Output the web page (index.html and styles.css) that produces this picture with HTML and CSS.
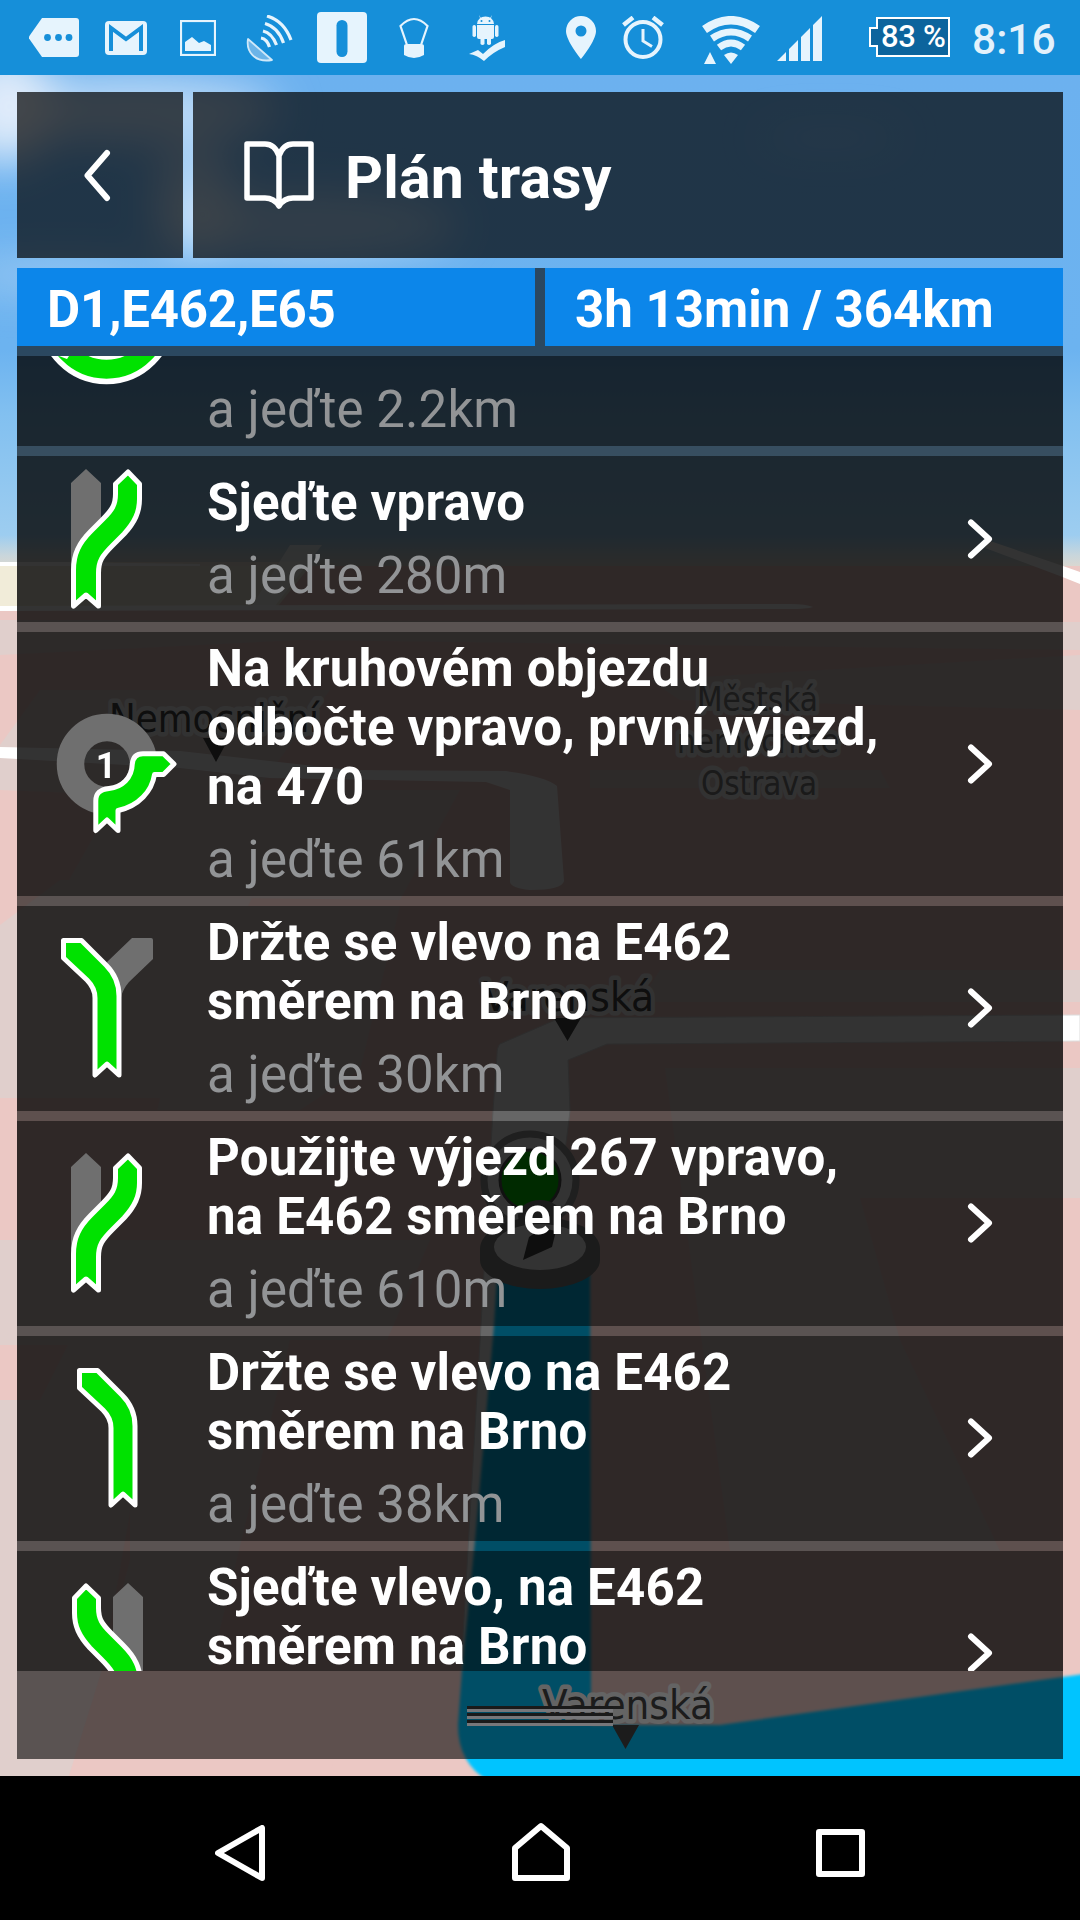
FILE: index.html
```html
<!DOCTYPE html>
<html lang="cs">
<head>
<meta charset="utf-8">
<title>Plán trasy</title>
<link rel="stylesheet" href="styles.css">
</head>
<body>
<svg width="0" height="0" class="defs">
  <defs>
    <symbol id="exit" viewBox="0 0 140 140">
      <path class="lane" d="M34 112V14L49 0L64 14V60L46 78Z"/>
      <path class="route" d="M36.5 137V101C36.5 85 42 74 54 62L66 50C75 41 78.500 36 78.500 25V15L91 3L102.500 15V30C102.500 43 98 53 87 65L76 76C65 87 61.500 92 61.500 104V137L49 126Z"/>
    </symbol>
    <symbol id="keep" viewBox="0 0 140 140">
      <path class="route" d="M26.500 2.500H44.500L69 27C78 36 82 45 82 58V137L70 126L58 137V60C58 52 55 47 50 42L26.500 20Z"/>
    </symbol>
    <symbol id="chevron" viewBox="0 0 40 40">
      <path d="M11 3.500L29 20L11 36.500" fill="none" stroke="#fff" stroke-width="6" stroke-linecap="round" stroke-linejoin="round"/>
    </symbol>
  </defs>
</svg>

<div class="screen">
  <header class="status">
    <svg class="s-more" width="50" height="39" viewBox="0 0 50 39"><path fill="#e6f4fd" d="M13 0H47Q50 0 50 3V36Q50 39 47 39H13L0 20.500V18.500Z"/><g fill="#168fd9"><circle cx="18.500" cy="19.500" r="3.400"/><circle cx="29.500" cy="19.500" r="3.400"/><circle cx="40" cy="19.500" r="3.400"/></g></svg>
    <svg class="s-mail" width="42" height="34" viewBox="0 0 42 34"><rect width="42" height="34" rx="4" fill="#e6f4fd"/><path d="M6 30V7L21 18L36 7V30" fill="none" stroke="#168fd9" stroke-width="4"/></svg>
    <svg class="s-img" width="36" height="36" viewBox="0 0 36 36"><rect x="1" y="1" width="34" height="34" fill="none" stroke="#e6f4fd" stroke-width="2.200"/><path fill="#e6f4fd" d="M5 31V22L12 17L19 23L24 21L31 25V31Z"/></svg>
    <svg class="s-sat" width="48" height="48" viewBox="0 0 48 48"><path d="M2 24C0 36 8 48 26 45Z" fill="#6bb4e8" stroke="#cfe8f9" stroke-width="1.800" stroke-linejoin="round"/><g fill="none" stroke="#e6f4fd" stroke-width="3.200"><path d="M21 1Q38 6 45 25"/><path d="M19 8.500Q32 12 37.500 28"/><path d="M17 16Q26 18 30.500 30"/><path d="M15 23Q21 24 23.500 32"/></g></svg>
    <svg class="s-box" width="50" height="51" viewBox="0 0 50 51"><rect width="50" height="51" rx="4" fill="#e6f4fd"/><rect x="19.500" y="8" width="11" height="37" rx="5.500" fill="#168fd9"/></svg>
    <svg class="s-bal" width="30" height="42" viewBox="0 0 30 42"><path d="M8 28L1.500 9Q15 -5 28.500 9L22 28" fill="none" stroke="#e6f4fd" stroke-width="2.200"/><path fill="#e6f4fd" d="M5 29Q5 27 8 27H22Q25 27 25 29V38Q15 44 5 38Z"/></svg>
    <svg class="s-and" width="37" height="46" viewBox="0 0 37 46"><g fill="#e6f4fd"><path d="M8 9Q9 1.500 16.500 1.500T25 9Z"/><path d="M8 10H25V22Q25 24 23 24H22V29Q20 31 18 29V24H15.500V29Q13.500 31 11.500 29V24H10Q8 24 8 22Z"/><rect x="3.500" y="10" width="3.500" height="12" rx="1.700"/><rect x="26" y="10" width="3.500" height="12" rx="1.700"/><path d="M0 39L9 35L14 39Q25 28 36 25V32Q24 37 15 46Q8 40 0 39Z"/><path d="M10 0L12.500 4L11.500 4.500ZM23 0L20.500 4L21.500 4.500Z"/></g><g fill="#168fd9"><circle cx="12.500" cy="6" r="1"/><circle cx="20.500" cy="6" r="1"/></g></svg>
    <svg class="s-pin" width="30" height="43" viewBox="0 0 30 43"><path fill="#e6f4fd" fill-rule="evenodd" d="M15 0A15 15 0 0 1 30 15C30 25 15 43 15 43S0 25 0 15A15 15 0 0 1 15 0ZM15 9.500A5.500 5.500 0 1 0 15 20.500A5.500 5.500 0 1 0 15 9.500Z"/></svg>
    <svg class="s-alarm" width="42" height="43" viewBox="0 0 42 43"><g fill="none" stroke="#e6f4fd"><circle cx="21" cy="23.500" r="17.500" stroke-width="4"/><path d="M21 13V25L30 30.500" stroke-width="3"/><path d="M1.500 9L11 1.500M31 1.500L40.500 9" stroke-width="4.500"/></g></svg>
    <svg class="s-wifi" width="58" height="48" viewBox="0 0 58 48"><g fill="none" stroke="#e6f4fd"><path d="M2.500 13.500Q29 -5 55.500 13.500" stroke-width="8.500"/><path d="M10 22.500Q29 9.500 48 22.500" stroke-width="7"/><path d="M17 31.500Q29 22.500 41 31.500" stroke-width="7"/></g><path fill="#e6f4fd" d="M22 39Q29 34 36 39L29 48ZM2 48L8 36L14 48Z"/></svg>
    <svg class="s-signal" width="45" height="45" viewBox="0 0 45 45"><path fill="#e6f4fd" d="M0 45L9 36V45ZM12 45V33L21 24V45ZM24 45V21L33 12V45ZM36 45V9L45 0V45Z"/></svg>
    <div class="battery"><svg width="82" height="40" viewBox="0 0 82 40"><path d="M8 1H80V39H8V29H1V11H8Z" fill="#0c649d" stroke="#fff" stroke-width="2"/></svg><span>83 %</span></div>
    <div class="clock">8:16</div>
  </header>

  <main class="stage">
    <svg class="map" width="1080" height="1701" viewBox="0 75 1080 1701">
      <defs>
        <linearGradient id="sky" x1="0" y1="75" x2="0" y2="575" gradientUnits="userSpaceOnUse">
          <stop offset="0" stop-color="#6cb1ef"/><stop offset=".55" stop-color="#6cb3f0"/><stop offset=".68" stop-color="#82c0f0"/><stop offset=".92" stop-color="#9dcdf0"/><stop offset=".96" stop-color="#c8d6dc"/><stop offset="1" stop-color="#e6d8c8"/>
        </linearGradient>
        <filter id="cloud" x="-50%" y="-50%" width="200%" height="200%"><feGaussianBlur stdDeviation="22"/></filter>
        <filter id="soft"><feGaussianBlur stdDeviation="1.500"/></filter>
      </defs>
      <rect y="75" width="1080" height="500" fill="url(#sky)"/>
      <g filter="url(#cloud)" fill="#e8f0fa">
        <ellipse cx="5" cy="105" rx="50" ry="60" opacity=".9"/>
        <ellipse cx="130" cy="110" rx="150" ry="32" opacity=".65"/>
        <ellipse cx="195" cy="200" rx="40" ry="60" opacity=".6"/>
        <ellipse cx="310" cy="225" rx="150" ry="34" opacity=".5"/>
        <ellipse cx="60" cy="275" rx="110" ry="16" opacity=".4"/>
        <ellipse cx="830" cy="138" rx="75" ry="8" opacity=".3"/>
      </g>
      <rect y="566" width="1080" height="1210" fill="#ebc8c4"/>
      <path fill="#f1ecd9" d="M0 566H310L278 606H0Z"/>
      <path fill="#eee7da" d="M0 562H300V566H0Z"/>
      <path fill="#fff" d="M0 562H60L200 564V566H0Z"/>
      <g fill="#e0cfcc">
        <path d="M0 620L1080 622V650L300 640L0 655Z"/>
        <path d="M650 680L1080 655V710L680 700Z"/>
        <path d="M0 745L40 690H330L250 800L0 790Z"/>
        <path d="M60 896L120 790H460L400 900Z"/>
        <path d="M590 770H880L890 788H590Z"/>
        <path d="M0 925L60 880H260L160 1100H0Z"/>
        <path d="M150 906H400L360 1070L300 1110H150Z"/>
        <path d="M660 970H1080V1002H640Z"/>
        <path d="M665 1068H1080V1198H860L900 1340L1000 1551H730Z"/>
        <path d="M0 1240H430L200 1776H69L102 1670L130 1560V1400H0Z"/>
        <path d="M0 1400H150L102 1670L69 1776H0Z"/>
      </g>
      <path fill="#ebc8c4" d="M0 1345H68L40 1400H0ZM0 1098H160L130 1240H0ZM290 1340H430L330 1776H69L102 1670H210Z"/>
      <g fill="#fff">
        <path d="M290 545H322L275 606H252Z" opacity=".7"/>
        <path d="M0 606L790 604Q806 604 813 607Q806 609 790 609L0 611Z"/>
        <path d="M990 541L1063 566L1080 572V584L1060 576L985 548Z"/>
        <path d="M0 747L180 751L350 770L505 771Q545 776 557 786L564 881Q562 890 530 890Q511 888 510 882V790L486 782L270 778L180 768L0 758Z"/>
        <path stroke="#ddd" d="M1080 1015L560 1018L500 1044Q497 1047 497 1055L493 1111L481 1326L461 1671H500L570 1111L568 1060L607 1044L1080 1041Z"/>
      </g>
      <g filter="url(#soft)" fill="#00c4ff">
        <path d="M498 1260H590L591 1725H720L1084 1674V1790H510Q458 1775 458 1725L462 1671L475 1541L494 1326Z"/>
      </g>
      <path d="M1076 1700H1080V1776H520V1765H1076Z" fill="#00c4ff"/>
      <circle cx="530" cy="1180" r="46" fill="#fff" stroke="#999" stroke-width="7"/>
      <circle cx="530" cy="1180" r="30" fill="#00d200" stroke="#555" stroke-width="3"/>
      <ellipse cx="540" cy="1216" rx="22" ry="16" fill="#888"/>
      <path fill="#858585" d="M480 1249A60 32 0 0 1 600 1249V1260A60 29 0 0 1 480 1260Z"/>
      <ellipse cx="540" cy="1247" rx="46" ry="23" fill="#fff"/>
      <path fill="#484848" d="M523 1260L529 1237L542 1228L556 1231L552 1247Z"/>
      <g class="label">
        <text x="109" y="732" font-size="39" textLength="210" lengthAdjust="spacingAndGlyphs">Nemocniční</text>
        <text x="483" y="1011" font-size="40" textLength="171" lengthAdjust="spacingAndGlyphs">Varenská</text>
        <text x="542" y="1719" font-size="40" textLength="171" lengthAdjust="spacingAndGlyphs">Varenská</text>
        <g class="poi">
          <text x="697" y="711" font-size="34" textLength="121" lengthAdjust="spacingAndGlyphs">Městská</text>
          <text x="677" y="753" font-size="34" textLength="162" lengthAdjust="spacingAndGlyphs">nemocnice</text>
          <text x="701" y="795" font-size="34" textLength="116" lengthAdjust="spacingAndGlyphs">Ostrava</text>
        </g>
      </g>
      <path fill="#464646" d="M203 738H229L216 762ZM554 1018H581L567.500 1041ZM612 1725H639L625.500 1749Z"/>
    </svg>

    <div class="overlay">
      <div class="topbar">
        <div class="tile back"><svg width="28" height="56" viewBox="0 0 28 56"><path d="M24 6L4.500 28.500L24 51" fill="none" stroke="#fff" stroke-width="6" stroke-linecap="round" stroke-linejoin="round"/></svg></div>
        <div class="tile title">
          <svg width="70" height="70" viewBox="0 0 70 70"><path d="M35 16Q31 4 21 4H3V58H21Q30 58 35 66Q40 58 49 58H67V4H49Q39 4 35 16V64" fill="none" stroke="#fff" stroke-width="5.500" stroke-linejoin="round"/></svg>
          <h1>Plán trasy</h1>
        </div>
      </div>

      <section class="panel">
        <div class="info"><div class="roads">D1,E462,E65</div><div>3h 13min / 364km</div></div>
        <div class="list">
          <article class="row first">
            <svg class="turn" width="140" height="90" viewBox="0 0 140 90"><circle cx="69.500" cy="-40" r="65.500" fill="#00e200" stroke="#fff" stroke-width="5.500"/><circle cx="69.500" cy="-40" r="41" fill="#1b272e" stroke="#fff" stroke-width="5.500"/><path fill="#fff" d="M22 0H32L30 3Z"/></svg>
            <div class="text"><p>a jeďte 2.2km</p></div>
          </article>
          <article class="row">
            <svg class="turn" width="140" height="140"><use href="#exit"/></svg>
            <div class="text"><h2>Sjeďte vpravo</h2><p>a jeďte 280m</p></div>
            <svg class="go" width="40" height="40"><use href="#chevron"/></svg>
          </article>
          <article class="row">
            <svg class="turn" width="140" height="140" viewBox="0 0 140 140"><circle cx="70" cy="70" r="36.500" fill="none" stroke="#6f6f6f" stroke-width="27.500"/><path class="route" d="M58.800 136.500V107C58.800 99 63 95.500 72 94.500C85 93 95 84 95.300 70C96 63 100 59.800 106 59.800H126.500L137 70L126.500 80.500H117.500C115 97 102 112 81 116.500V136.500L70 126Z"/><text x="69" y="84" class="exit-no">1</text></svg>
            <div class="text"><h2>Na kruhovém objezdu<br>odbočte vpravo, první výjezd,<br>na 470</h2><p>a jeďte 61km</p></div>
            <svg class="go" width="40" height="40"><use href="#chevron"/></svg>
          </article>
          <article class="row two-line">
            <svg class="turn" width="140" height="140" viewBox="0 0 140 140"><path class="lane" d="M95 0H114Q116 0 116 2V21L92 44Q86 51 84 59L70 24Z"/><use href="#keep" width="140" height="140"/></svg>
            <div class="text"><h2>Držte se vlevo na E462<br>směrem na Brno</h2><p>a jeďte 30km</p></div>
            <svg class="go" width="40" height="40"><use href="#chevron"/></svg>
          </article>
          <article class="row two-line">
            <svg class="turn" width="140" height="140"><use href="#exit"/></svg>
            <div class="text"><h2>Použijte výjezd 267 vpravo,<br>na E462 směrem na Brno</h2><p>a jeďte 610m</p></div>
            <svg class="go" width="40" height="40"><use href="#chevron"/></svg>
          </article>
          <article class="row two-line">
            <svg class="turn" width="140" height="140" viewBox="0 0 140 140"><use href="#keep" x="16" width="140" height="140"/></svg>
            <div class="text"><h2>Držte se vlevo na E462<br>směrem na Brno</h2><p>a jeďte 38km</p></div>
            <svg class="go" width="40" height="40"><use href="#chevron"/></svg>
          </article>
          <article class="row last">
            <svg class="turn mirrored" width="140" height="140"><use href="#exit"/></svg>
            <div class="text"><h2>Sjeďte vlevo, na E462<br>směrem na Brno</h2></div>
            <svg class="go" width="40" height="40"><use href="#chevron"/></svg>
          </article>
        </div>
        <div class="grip"><i></i><i></i><i></i></div>
      </section>
    </div>
  </main>

  <nav class="nav">
    <svg width="50" height="56" viewBox="0 0 50 56"><path d="M47 3V53L3 28Z"/></svg>
    <svg width="58" height="59" viewBox="0 0 58 59"><path d="M3 56V26L29 4L55 26V56Z"/></svg>
    <svg width="49" height="48" viewBox="0 0 49 48"><path d="M3 3H46V45H3Z"/></svg>
  </nav>
</div>
</body>
</html>
```

FILE: styles.css
```css
* { box-sizing: border-box; }
body, h1, h2, p { margin: 0; }
body { font-family: Roboto, "Liberation Sans", sans-serif; color: #fff; background: #000; }
svg { display: block; flex: none; }
.defs { position: absolute; }

.screen { width: 1080px; height: 1920px; display: flex; flex-direction: column; overflow: hidden; }

.status { height: 75px; flex: none; background: #168fd9; display: flex; align-items: flex-start; padding-left: 29px; }
.s-more { margin-top: 18px; }
.s-mail { margin: 21px 0 0 26px; }
.s-img { margin: 20px 0 0 33px; }
.s-sat { margin: 15px 0 0 30px; }
.s-box { margin: 12px 0 0 23px; }
.s-bal { margin: 17px 0 0 32px; }
.s-and { margin: 15px 0 0 40px; }
.s-pin { margin: 16px 0 0 60px; }
.s-alarm { margin: 16px 0 0 26px; }
.s-wifi { margin: 16px 0 0 38px; }
.s-signal { margin: 16px 0 0 17px; }
.battery { display: grid; margin: 17px 0 0 47px; width: 82px; height: 40px; }
.battery > * { grid-area: 1 / 1; }
.battery span { font-size: 31px; font-weight: 500; line-height: 40px; padding-left: 12px; white-space: nowrap; letter-spacing: -.3px; }
.clock { margin: 13px 0 0 21px; font-size: 42.500px; font-weight: 500; line-height: 54px; color: #e3f1fb; }

.stage { position: relative; height: 1701px; flex: none; overflow: hidden; }
.map { position: absolute; left: 0; top: 0; }
.label text { font-family: "DejaVu Sans", sans-serif; fill: #464646; stroke: #fafafa; stroke-width: 9px; stroke-linejoin: round; paint-order: stroke; }
.label .poi text { fill: #808080; }

.overlay { position: relative; height: 1684px; padding: 17px 17px 0; display: flex; flex-direction: column; gap: 10px; }
.topbar { display: flex; gap: 10px; height: 166px; flex: none; }
.tile { background: rgba(0, 0, 0, .7); display: flex; align-items: center; }
.back { width: 166px; justify-content: center; padding-right: 6px; }
.title { flex: 1; padding-left: 51px; gap: 31px; }
.title h1 { font-size: 59px; font-weight: 700; line-height: 70px; padding-top: 5px; letter-spacing: .15px; }

.panel { flex: 1; background: rgba(0, 0, 0, .6); display: flex; flex-direction: column; }
.info { display: grid; grid-template-columns: 518px 518px; gap: 10px; font-size: 51px; font-weight: 700; line-height: 78px; }
.info div { background: #0c86ea; padding: 3px 0 0 30px; height: 78px; }
.info .roads { letter-spacing: -.25px; }
.list { margin-top: 10px; display: flex; flex-direction: column; gap: 10px; }

.row { background: rgba(0, 0, 0, .5); min-height: 166px; display: grid; grid-template-columns: 140px 1fr 40px; align-items: center; padding: 7px 63px 7px 20px; }
.row.two-line .turn, .row.two-line .go { margin-top: -1px; }
.row.first { min-height: 0; height: 90px; align-items: end; padding: 0 63px 0 20px; overflow: hidden; }
.row.first .text { padding-bottom: 7px; }
.row.last { min-height: 0; height: 120px; overflow: hidden; align-items: start; }
.row.last .turn { margin-top: 25px; }
.row.last .go { margin-top: 75px; }
.text { padding-left: 30px; font-size: 51px; line-height: 59px; white-space: nowrap; }
.text h2 { font-size: inherit; font-weight: 700; letter-spacing: .2px; }
.text p { color: #929496; letter-spacing: .1px; }
.text h2 + p { margin-top: 14px; }
.mirrored { transform: scaleX(-1); }
.lane { fill: #6f6f6f; }
.route { fill: #00e200; stroke: #fff; stroke-width: 5px; stroke-linejoin: round; }
.exit-no { font-size: 36px; font-weight: 700; fill: #fff; text-anchor: middle; }

.grip { margin: 35px auto 0 450px; width: 146px; display: flex; flex-direction: column; gap: 1px; }
.grip i { height: 6px; border-top: 3px solid #1a1a1a; border-bottom: 3px solid #77777a; }

.nav { height: 144px; flex: none; background: #000; display: flex; align-items: flex-start; padding: 0 215px; justify-content: space-between; }
.nav svg { fill: none; stroke: #fff; stroke-width: 6px; stroke-linejoin: round; margin-top: 49px; }
.nav svg:nth-child(2) { margin-top: 46px; }
.nav svg:nth-child(3) { margin-top: 53px; }
```
